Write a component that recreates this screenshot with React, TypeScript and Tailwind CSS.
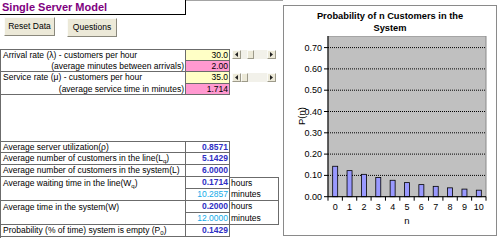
import React from "react";

const lineColor = "border-[#6b6b6b]";

const Arrow = ({ dir }: { dir: "left" | "right" }) => (
  <div className="w-[9px] h-[9px] bg-[#ece9d8] border border-t-[#fbfbf8] border-l-[#fbfbf8] border-r-[#9d9a8a] border-b-[#9d9a8a] flex items-center justify-center">
    <svg width="3" height="5" viewBox="0 0 3 5">
      {dir === "left" ? <polygon points="3,0 3,5 0,2.5" fill="#222" /> : <polygon points="0,0 0,5 3,2.5" fill="#222" />}
    </svg>
  </div>
);

const ScrollBar = ({ thumbClass }: { thumbClass: string }) => (
  <div className="ml-[2px] w-[44px] h-[9px] flex bg-[#f2f1ea] self-center">
    <Arrow dir="left" />
    <div className="flex-1 flex">
      <div className={`${thumbClass} w-[7px] h-[9px] bg-[#ece9d8] border border-t-[#fbfbf8] border-l-[#fbfbf8] border-r-[#9d9a8a] border-b-[#9d9a8a]`} />
    </div>
    <Arrow dir="right" />
  </div>
);

const probs = [0.1429, 0.1224, 0.105, 0.09, 0.0771, 0.0661, 0.0567, 0.0486, 0.0416, 0.0357, 0.0306];

const Chart = () => {
  const x0 = 44;
  const x1 = 202;
  const y0 = 160.7;
  const cw = (x1 - x0) / 11;
  const yOf = (v: number) => y0 - v * 213;
  const ticks = [0, 0.1, 0.2, 0.3, 0.4, 0.5, 0.6, 0.7];
  return (
    <div className="mt-[5px] w-[214px] h-[231px] border border-[#8a8a8a] flex flex-col bg-white">
      <div className="h-[30px] pt-[5px] text-center text-[9.3px] font-bold leading-[11.5px] text-black">
        Probability of n Customers in the
        <br />
        System
      </div>
      <svg width="212" height="199" className="block">
        <rect x={x0} y={0} width={x1 - x0} height={y0} fill="#c0c0c0" stroke="#8a8a8a" strokeWidth="1" />
        {ticks.slice(1).map((t) => (
          <line key={t} x1={x0} x2={x1} y1={yOf(t)} y2={yOf(t)} stroke="#000" strokeWidth="1" strokeDasharray="1 1" />
        ))}
        {probs.map((p, i) => {
          const cx = x0 + (i + 0.5) * cw;
          return (
            <rect key={i} x={cx - 2.5} y={yOf(p)} width={5} height={y0 - yOf(p)} fill="#9999ff" stroke="#000" strokeWidth="0.8" />
          );
        })}
        <line x1={x0} x2={x0} y1={0} y2={y0} stroke="#000" strokeWidth="1" />
        <line x1={x0} x2={x1} y1={y0} y2={y0} stroke="#000" strokeWidth="1" />
        {ticks.map((t) => (
          <g key={t}>
            <line x1={x0 - 4} x2={x0} y1={yOf(t)} y2={yOf(t)} stroke="#000" strokeWidth="1" />
            <text x={x0 - 6} y={yOf(t) + 3} textAnchor="end" fontSize="9" fill="#000" fontFamily="Liberation Sans, Arial, sans-serif">
              {t.toFixed(2)}
            </text>
          </g>
        ))}
        {Array.from({ length: 12 }).map((_, k) => (
          <line key={k} x1={x0 + k * cw} x2={x0 + k * cw} y1={y0} y2={y0 + 4} stroke="#000" strokeWidth="1" />
        ))}
        {probs.map((_, i) => (
          <text key={i} x={x0 + (i + 0.5) * cw} y={174} textAnchor="middle" fontSize="9" fill="#000" fontFamily="Liberation Sans, Arial, sans-serif">
            {i}
          </text>
        ))}
        <text x={123} y={188} textAnchor="middle" fontSize="9.5" fill="#000" fontFamily="Liberation Sans, Arial, sans-serif">
          n
        </text>
        <text x={21} y={80} textAnchor="middle" fontSize="9.5" fill="#000" transform="rotate(-90 21 80)" fontFamily="Liberation Sans, Arial, sans-serif">
          P(n)
        </text>
      </svg>
    </div>
  );
};

const App: React.FC = () => {
  return (
    <div className="w-[500px] h-[246px] bg-white flex font-['Liberation_Sans',Arial,sans-serif] text-black overflow-hidden">
      <div className="w-[283px] flex flex-col">
        {/* title */}
        <div className="flex">
          <div className="w-[186px] h-[15px] border-r border-b border-black pl-[2px] text-[11px] font-bold leading-[14px] text-[#800080]">
            Single Server Model
          </div>
          <div className="flex-1 border-t border-[#a4a4a4]" />
        </div>

        {/* buttons */}
        <div className="flex pl-[4px] mt-[2px] h-[20px]">
          <button className="w-[51px] h-[19px] bg-[#ece9d8] border border-t-[#fbfbf8] border-l-[#fbfbf8] border-r-[#8a887c] border-b-[#8a887c] text-[8.5px] leading-[17px] text-black">
            Reset Data
          </button>
          <button className="ml-[12px] mt-[1px] w-[50px] h-[19px] bg-[#ece9d8] border border-t-[#fbfbf8] border-l-[#fbfbf8] border-r-[#8a887c] border-b-[#8a887c] text-[8.5px] leading-[17px] text-black">
            Questions
          </button>
        </div>

        {/* tables */}
        <div className={`mt-[12px] h-[189px] border-l ${lineColor} flex flex-col text-[8.5px] leading-[11px]`}>
          {/* inputs */}
          <div className="flex h-[11.5px]">
            <div className={`w-[185px] border-t border-r ${lineColor} pl-[2px]`}>Arrival rate (λ) - customers per hour</div>
            <div className={`w-[44px] border-t border-r border-b ${lineColor} bg-[#ffffc6] text-right pr-[1px]`}>30.0</div>
            <ScrollBar thumbClass="ml-[6px]" />
          </div>
          <div className="flex h-[11.5px]">
            <div className={`w-[185px] border-b border-r ${lineColor} text-right pr-[1px]`}>(average minutes between arrivals)</div>
            <div className={`w-[44px] border-r border-b ${lineColor} bg-[#ff99d0] text-right pr-[1px]`}>2.00</div>
          </div>
          <div className="flex h-[11.5px]">
            <div className={`w-[185px] border-r ${lineColor} pl-[2px]`}>Service rate (μ) - customers per hour</div>
            <div className={`w-[44px] border-r border-b ${lineColor} bg-[#ffffc6] text-right pr-[1px]`}>35.0</div>
            <ScrollBar thumbClass="ml-0" />
          </div>
          <div className="flex h-[11.5px]">
            <div className={`w-[185px] border-b border-r ${lineColor} text-right pr-[1px]`}>(average service time in minutes)</div>
            <div className={`w-[44px] border-r border-b ${lineColor} bg-[#ff99d0] text-right pr-[1px]`}>1.714</div>
          </div>

          <div className="h-[46px]" />

          {/* outputs */}
          <div className="flex h-[12px]">
            <div className={`w-[185px] border-t border-b border-r ${lineColor} pl-[2px]`}>Average server utilization(ρ)</div>
            <div className={`w-[44px] border-t border-r border-b ${lineColor} text-right pr-[1px] font-bold text-[#2f2fc4]`}>0.8571</div>
          </div>
          <div className="flex h-[12px]">
            <div className={`w-[185px] border-b border-r ${lineColor} pl-[2px]`}>
              Average number of customers in the line(L<sub className="text-[6px]">q</sub>)
            </div>
            <div className={`w-[44px] border-r border-b ${lineColor} text-right pr-[1px] font-bold text-[#2f2fc4]`}>5.1429</div>
          </div>
          <div className="flex h-[12px]">
            <div className={`w-[185px] border-b border-r ${lineColor} pl-[2px]`}>Average number of customers in the system(L)</div>
            <div className={`w-[44px] border-r border-b ${lineColor} text-right pr-[1px] font-bold text-[#2f2fc4]`}>6.0000</div>
          </div>
          <div className="flex h-[24px]">
            <div className={`w-[185px] border-b border-r ${lineColor} pl-[2px] leading-[12px]`}>
              Average waiting time in the line(W<sub className="text-[6px]">q</sub>)
            </div>
            <div className="w-[44px] flex flex-col">
              <div className={`h-[12px] border-r border-b ${lineColor} text-right pr-[1px] font-bold text-[#2f2fc4]`}>0.1714</div>
              <div className={`h-[12px] border-r border-b ${lineColor} text-right pr-[1px] text-[#12abe8]`}>10.2857</div>
            </div>
            <div className={`w-[49px] flex flex-col border-t border-r border-b ${lineColor} pl-[1px]`}>
              <div className="h-[11px]">hours</div>
              <div className="h-[11px]">minutes</div>
            </div>
          </div>
          <div className="flex h-[24px]">
            <div className={`w-[185px] border-b border-r ${lineColor} pl-[2px] leading-[12px]`}>Average time in the system(W)</div>
            <div className="w-[44px] flex flex-col">
              <div className={`h-[12px] border-r border-b ${lineColor} text-right pr-[1px] font-bold text-[#2f2fc4]`}>0.2000</div>
              <div className={`h-[12px] border-r border-b ${lineColor} text-right pr-[1px] text-[#12abe8]`}>12.0000</div>
            </div>
            <div className={`w-[49px] flex flex-col border-r border-b ${lineColor} pl-[1px]`}>
              <div className="h-[12px]">hours</div>
              <div className="h-[11px]">minutes</div>
            </div>
          </div>
          <div className="flex h-[12px]">
            <div className={`w-[185px] border-b border-r ${lineColor} pl-[2px]`}>
              Probability (% of time) system is empty (P<sub className="text-[6px]">0</sub>)
            </div>
            <div className={`w-[44px] border-r border-b ${lineColor} text-right pr-[1px] font-bold text-[#2f2fc4]`}>0.1429</div>
          </div>
        </div>
      </div>

      <Chart />
    </div>
  );
};

export default App;
